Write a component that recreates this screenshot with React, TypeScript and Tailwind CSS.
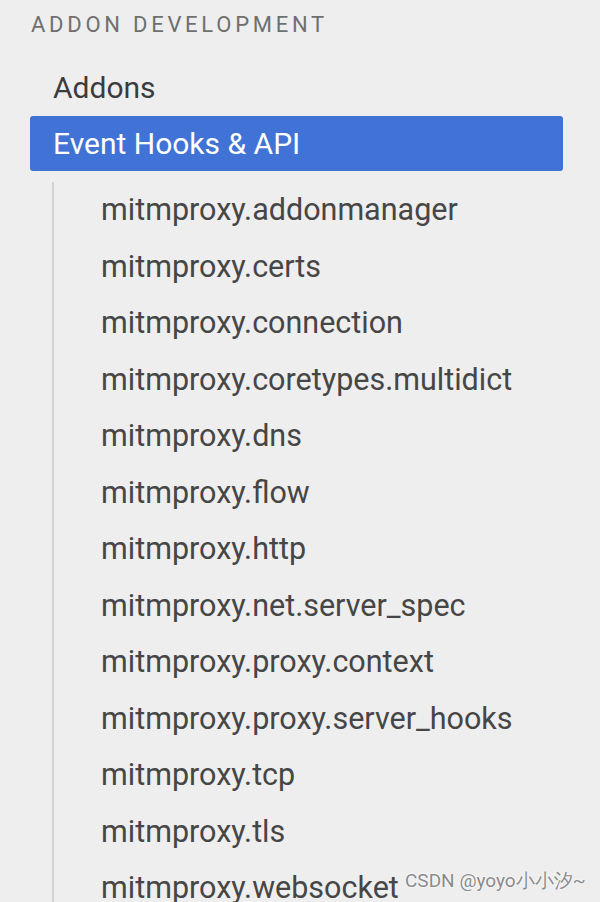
const modules = [
  "mitmproxy.addonmanager",
  "mitmproxy.certs",
  "mitmproxy.connection",
  "mitmproxy.coretypes.multidict",
  "mitmproxy.dns",
  "mitmproxy.flow",
  "mitmproxy.http",
  "mitmproxy.net.server_spec",
  "mitmproxy.proxy.context",
  "mitmproxy.proxy.server_hooks",
  "mitmproxy.tcp",
  "mitmproxy.tls",
  "mitmproxy.websocket",
];

export default function App() {
  return (
    <div
      className="relative h-[902px] w-[600px] overflow-hidden bg-[#eeeeee]"
      style={{ fontFamily: "Roboto, 'Noto Sans', sans-serif" }}
    >
      <div className="pt-[12px] pl-[31px] text-[22px] leading-[26px] tracking-[0.17em] text-[#6f6f6f]">
        ADDON DEVELOPMENT
      </div>
      <div className="mt-[22px] pl-[30px] pr-[37px]">
        <div className="h-[56px] pl-[23px] text-[30px] leading-[56px] text-[#3c3c3c]">Addons</div>
        <div className="h-[55px] rounded-[3px] bg-[#4173d6] pl-[23px] text-[30px] leading-[55px] text-white">
          Event Hooks &amp; API
        </div>
        <div className="mt-[11px] ml-[22px] border-l-2 border-[#d4d4d4] pl-[47px]">
          {modules.map((m) => (
            <div key={m} className="h-[56.5px] text-[30.5px] leading-[56.5px] text-[#464646]">
              {m}
            </div>
          ))}
        </div>
      </div>
      <div
        className="absolute left-[405px] top-[869px] text-[19px] leading-[24px] text-[#8a8a8a]"
        style={{ textShadow: "0 0 2px #fff, 0 0 2px #fff" }}
      >
        CSDN @yoyo小小汐~
      </div>
    </div>
  );
}
